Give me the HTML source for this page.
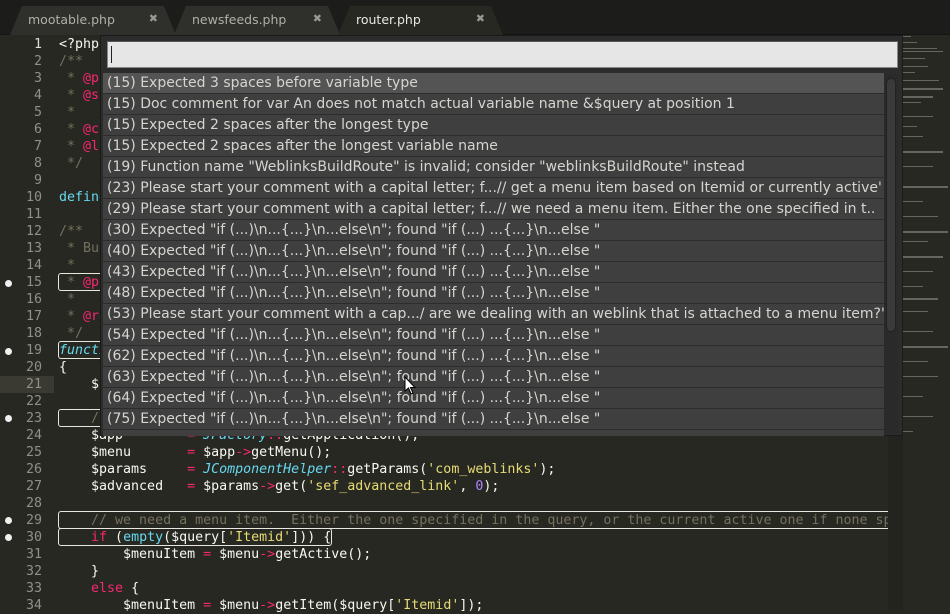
<!DOCTYPE html>
<html><head><meta charset="utf-8"><style>
*{margin:0;padding:0;box-sizing:border-box}
body{width:950px;height:610px;overflow:hidden;background:#272822;position:relative;font-family:"DejaVu Sans Mono","Liberation Mono",monospace}
#tabs{position:absolute;left:0;top:0;width:950px;height:35px;background:#1c1c1a;border-bottom:1px solid #151513}
.tab{position:absolute;top:6px;height:29px;background:#2f2f2c;border-radius:8px 8px 0 0;font-family:"DejaVu Sans",sans-serif;font-size:12.5px;color:#b0b0a8;padding:6px 0 0 18px;clip-path:polygon(0 100%,12px 0,calc(100% - 12px) 0,100% 100%)}
.tab.a{background:#272822;color:#e8e8e0}
.tab .x{position:absolute;right:18px;top:6px;color:#999;font-size:11px}
.ln{position:absolute;left:0;width:42px;text-align:right;color:#8f908a;font-size:13.3px;height:17px;line-height:17px}
.code{position:absolute;left:59px;font-size:13.3px;height:17px;line-height:17px;color:#f8f8f2;white-space:pre}
.dot{position:absolute;left:5px;width:7px;height:7px;border-radius:50%;background:#f0f0f0}
.box{position:absolute;border:1px solid #e8e8e0;border-radius:3px;height:18px}
.c{color:#75715e}.k{color:#f92672}.s{color:#e6db74}.f{color:#66d9ef}.i{color:#66d9ef;font-style:italic}.n{color:#ae81ff}
#pop{position:absolute;left:100px;top:35px;width:803px;height:401px;background:#2c2c2c;border:1px solid #1a1a1a}
#inp{position:absolute;left:6px;top:5px;width:791px;height:27px;background:#e6e6e6;border:1px solid #888;border-top-color:#555}
#inp:after{content:"";position:absolute;left:3px;top:4px;width:1px;height:17px;background:#222}
.row{position:absolute;left:2px;width:781px;height:20px;background:#3f3f3f;font-family:"DejaVu Sans",sans-serif;font-size:14px;color:#d5d5d0;padding-left:4px;line-height:20px;white-space:nowrap;overflow:hidden}
.row.sel{background:#545454}
#sb{position:absolute;left:783px;top:38px;width:14px;height:360px;background:#2a2a2a}
#sb div{position:absolute;left:2px;top:4px;width:10px;height:254px;background:#3a3a3a;border-radius:5px;border:1px solid #222}
#mm{position:absolute;left:903px;top:36px;width:47px;height:574px}
</style></head><body>
<div id="tabs">
<div class="tab" style="left:10px;width:166px">mootable.php<span class="x">✖</span></div>
<div class="tab" style="left:174px;width:166px">newsfeeds.php<span class="x">✖</span></div>
<div class="tab a" style="left:338px;width:165px">router.php<span class="x">✖</span></div>
</div>
<div style="position:absolute;left:0;top:376px;width:54px;height:17px;background:#3a3a33"></div>
<div class="ln" style="top:36px;color:#ddd">1</div><div class="ln" style="top:53px">2</div><div class="ln" style="top:70px">3</div><div class="ln" style="top:87px">4</div><div class="ln" style="top:104px">5</div><div class="ln" style="top:121px">6</div><div class="ln" style="top:138px">7</div><div class="ln" style="top:155px">8</div><div class="ln" style="top:172px">9</div><div class="ln" style="top:189px">10</div><div class="ln" style="top:206px">11</div><div class="ln" style="top:223px">12</div><div class="ln" style="top:240px">13</div><div class="ln" style="top:257px">14</div><div class="ln" style="top:274px">15</div><div class="ln" style="top:291px">16</div><div class="ln" style="top:308px">17</div><div class="ln" style="top:325px">18</div><div class="ln" style="top:342px">19</div><div class="ln" style="top:359px">20</div><div class="ln" style="top:376px">21</div><div class="ln" style="top:393px">22</div><div class="ln" style="top:410px">23</div><div class="ln" style="top:427px">24</div><div class="ln" style="top:444px">25</div><div class="ln" style="top:461px">26</div><div class="ln" style="top:478px">27</div><div class="ln" style="top:495px">28</div><div class="ln" style="top:512px">29</div><div class="ln" style="top:529px">30</div><div class="ln" style="top:546px">31</div><div class="ln" style="top:563px">32</div><div class="ln" style="top:580px">33</div><div class="ln" style="top:597px">34</div>
<div class="dot" style="top:280px"></div><div class="dot" style="top:348px"></div><div class="dot" style="top:415px"></div><div class="dot" style="top:517px"></div><div class="dot" style="top:534px"></div>
<div class="box" style="left:58px;top:273px;width:60px"></div>
<div class="box" style="left:58px;top:341px;width:60px"></div>
<div class="box" style="left:58px;top:409px;width:60px"></div>
<div class="box" style="left:58px;top:511px;width:842px;border-right:none;border-radius:3px 0 0 3px"></div>
<div class="box" style="left:58px;top:528px;width:274px"></div>
<div class="code" style="top:36px">&lt;?php</div>
<div class="code c" style="top:53px">/**</div>
<div class="code c" style="top:70px"> * <span class="k">@package</span></div>
<div class="code c" style="top:87px"> * <span class="k">@subpackage</span></div>
<div class="code c" style="top:104px"> *</div>
<div class="code c" style="top:121px"> * <span class="k">@copyright</span></div>
<div class="code c" style="top:138px"> * <span class="k">@license</span></div>
<div class="code c" style="top:155px"> */</div>
<div class="code f" style="top:189px">define</div>
<div class="code c" style="top:223px">/**</div>
<div class="code c" style="top:240px"> * Build</div>
<div class="code c" style="top:257px"> *</div>
<div class="code c" style="top:274px"> * <span class="k">@param</span></div>
<div class="code c" style="top:291px"> *</div>
<div class="code c" style="top:308px"> * <span class="k">@return</span></div>
<div class="code c" style="top:325px"> */</div>
<div class="code i" style="top:342px">function</div>
<div class="code" style="top:359px">{</div>
<div class="code" style="top:376px">    $segments</div>
<div class="code c" style="top:410px">    // get a menu item</div>
<div class="code" style="top:427px">    $app        <span class="k">=</span> <span class="i">JFactory</span><span class="k">::</span>getApplication();</div>
<div class="code" style="top:444px">    $menu       <span class="k">=</span> $app<span class="k">-&gt;</span>getMenu();</div>
<div class="code" style="top:461px">    $params     <span class="k">=</span> <span class="i">JComponentHelper</span><span class="k">::</span>getParams(<span class="s">'com_weblinks'</span>);</div>
<div class="code" style="top:478px">    $advanced   <span class="k">=</span> $params<span class="k">-&gt;</span>get(<span class="s">'sef_advanced_link'</span>, <span class="n">0</span>);</div>
<div class="code c" style="top:512px;width:829px;overflow:hidden">    // we need a menu item.  Either the one specified in the query, or the current active one if none specified</div>
<div class="code" style="top:529px">    <span class="k">if</span> (<span class="f">empty</span>($query[<span class="s">'Itemid'</span>])) {</div>
<div class="code" style="top:546px">        $menuItem <span class="k">=</span> $menu<span class="k">-&gt;</span>getActive();</div>
<div class="code" style="top:563px">    }</div>
<div class="code" style="top:580px">    <span class="k">else</span> {</div>
<div class="code" style="top:597px">        $menuItem <span class="k">=</span> $menu<span class="k">-&gt;</span>getItem($query[<span class="s">'Itemid'</span>]);</div>
<div style="position:absolute;left:888px;top:436px;width:15px;height:174px;background:#232320"></div>
<svg id="mm" width="47" height="574">
<g fill="#9a9a90" opacity=".55">
<rect x="0" y="0" width="8" height="1"/><rect x="0" y="6" width="14" height="1"/><rect x="0" y="12" width="34" height="1"/><rect x="0" y="15" width="40" height="1"/><rect x="0" y="22" width="22" height="1"/><rect x="0" y="30" width="25" height="1"/><rect x="0" y="36" width="12" height="1"/><rect x="0" y="44" width="36" height="1"/><rect x="0" y="52" width="40" height="2"/><rect x="0" y="60" width="30" height="2"/><rect x="0" y="66" width="18" height="1"/><rect x="0" y="80" width="30" height="1"/><rect x="0" y="90" width="14" height="1"/><rect x="0" y="100" width="20" height="1"/><rect x="0" y="115" width="40" height="2"/><rect x="0" y="130" width="30" height="1"/><rect x="0" y="150" width="45" height="2"/><rect x="0" y="165" width="20" height="1"/><rect x="0" y="180" width="35" height="1"/><rect x="0" y="195" width="45" height="2"/><rect x="0" y="205" width="25" height="1"/><rect x="0" y="220" width="40" height="2"/><rect x="0" y="235" width="30" height="1"/><rect x="0" y="250" width="20" height="1"/><rect x="0" y="262" width="35" height="2"/><rect x="0" y="275" width="25" height="1"/><rect x="0" y="295" width="30" height="1"/><rect x="0" y="310" width="45" height="2"/><rect x="0" y="325" width="25" height="1"/><rect x="0" y="340" width="35" height="1"/><rect x="0" y="360" width="20" height="1"/><rect x="0" y="380" width="30" height="1"/><rect x="0" y="395" width="10" height="1"/></g>
</svg>
<div id="pop">
<div id="inp"></div>
<div class="row sel" style="top:37px">(15) Expected 3 spaces before variable type</div>
<div class="row" style="top:58px">(15) Doc comment for var An does not match actual variable name &amp;$query at position 1</div>
<div class="row" style="top:79px">(15) Expected 2 spaces after the longest type</div>
<div class="row" style="top:100px">(15) Expected 2 spaces after the longest variable name</div>
<div class="row" style="top:121px">(19) Function name "WeblinksBuildRoute" is invalid; consider "weblinksBuildRoute" instead</div>
<div class="row" style="top:142px">(23) Please start your comment with a capital letter; f...// get a menu item based on Itemid or currently active'</div>
<div class="row" style="top:163px">(29) Please start your comment with a capital letter; f...// we need a menu item.  Either the one specified in t..</div>
<div class="row" style="top:184px">(30) Expected "if (...)\n...{...}\n...else\n"; found "if (...) ...{...}\n...else "</div>
<div class="row" style="top:205px">(40) Expected "if (...)\n...{...}\n...else\n"; found "if (...) ...{...}\n...else "</div>
<div class="row" style="top:226px">(43) Expected "if (...)\n...{...}\n...else\n"; found "if (...) ...{...}\n...else "</div>
<div class="row" style="top:247px">(48) Expected "if (...)\n...{...}\n...else\n"; found "if (...) ...{...}\n...else "</div>
<div class="row" style="top:268px">(53) Please start your comment with a cap.../ are we dealing with an weblink that is attached to a menu item?'</div>
<div class="row" style="top:289px">(54) Expected "if (...)\n...{...}\n...else\n"; found "if (...) ...{...}\n...else "</div>
<div class="row" style="top:310px">(62) Expected "if (...)\n...{...}\n...else\n"; found "if (...) ...{...}\n...else "</div>
<div class="row" style="top:331px">(63) Expected "if (...)\n...{...}\n...else\n"; found "if (...) ...{...}\n...else "</div>
<div class="row" style="top:352px">(64) Expected "if (...)\n...{...}\n...else\n"; found "if (...) ...{...}\n...else "</div>
<div class="row" style="top:373px">(75) Expected "if (...)\n...{...}\n...else\n"; found "if (...) ...{...}\n...else "</div>
<div class="row" style="top:394px;height:6px"></div>
<div id="sb"><div></div></div>
</div>
<svg style="position:absolute;left:404px;top:376px" width="14" height="20"><path d="M1 1 L1 15 L4.5 12 L7 18 L9 17 L6.5 11.5 L11 11.5 Z" fill="#fff" stroke="#000" stroke-width="1"/></svg>
</body></html>
